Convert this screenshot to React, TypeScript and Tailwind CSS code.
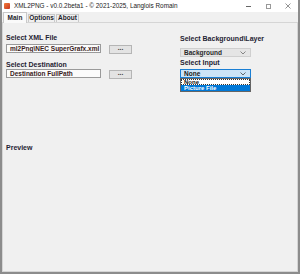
import React from 'react';

function Chevron({ color = '#6b6b6b' }: { color?: string }) {
  return (
    <svg width="6" height="4" viewBox="0 0 6 4" className="shrink-0">
      <polyline points="0.5,0.5 3,3 5.5,0.5" fill="none" stroke={color} strokeWidth="0.8" />
    </svg>
  );
}

function TitleBar() {
  return (
    <div className="flex h-[12px] items-center bg-white pl-[2px]">
      <div className="mr-[4px] h-[6px] w-[6px] rounded-[1px] bg-gradient-to-br from-[#f27b3a] to-[#c8331f]" />
      <span className="text-[6.4px] leading-[8px] text-[#222]">XML2PNG - v0.0.2beta1 - © 2021-2025, Langlois Romain</span>
      <div className="ml-auto flex items-center">
        <div className="flex w-[20px] justify-center">
          <div className="h-px w-[5px] bg-[#666]" />
        </div>
        <div className="flex w-[20px] justify-center">
          <div className="h-[5px] w-[5px] border border-[#999]" />
        </div>
        <div className="flex w-[20px] justify-center">
          <svg width="6" height="6" viewBox="0 0 6 6">
            <path d="M0.5 0.5 L5.5 5.5 M5.5 0.5 L0.5 5.5" stroke="#777" strokeWidth="0.8" />
          </svg>
        </div>
      </div>
    </div>
  );
}

function Tabs() {
  const tab =
    'flex shrink-0 items-center justify-center whitespace-nowrap border border-b-0 border-[#c9c9c9] text-[6.5px] font-bold leading-none text-[#1d1d2b]';
  return (
    <div className="flex h-[10px] items-end pl-[1px]">
      <div className={`${tab} z-10 -mb-px h-[11px] w-[24px] bg-[#fafafa]`}>Main</div>
      <div className={`${tab} ml-px h-[8px] w-[27px] bg-[#f0f0f0]`}>Options</div>
      <div className={`${tab} ml-px h-[8px] w-[23px] bg-[#f0f0f0]`}>About</div>
    </div>
  );
}

function Label({ children, className = '' }: { children: React.ReactNode; className?: string }) {
  return <div className={`h-[8px] whitespace-nowrap text-[7px] font-bold leading-[8px] text-[#1f2333] ${className}`}>{children}</div>;
}

function FileRow({ value, className = '' }: { value: string; className?: string }) {
  return (
    <div className={`flex items-start ${className}`}>
      <div className="flex h-[9px] w-[95px] items-center overflow-hidden whitespace-nowrap border border-[#9a9a9a] bg-[#fbfbfb] pl-[3px] text-[6.5px] font-bold text-[#3a1c1c]">
        {value}
      </div>
      <button
        type="button"
        className="ml-[8px] mt-px flex h-[9px] w-[23px] items-center justify-center border border-[#b5b5b5] bg-[#e3e3e3] pb-[2px] text-[6.5px] font-bold leading-none text-[#333]"
      >
        ...
      </button>
    </div>
  );
}

export default function App() {
  return (
    <div className="flex h-[274px] w-[300px] flex-col border-x-2 border-b-2 border-[#8c8c8c] bg-[#f0f0f0] font-['Liberation_Sans',Arial,sans-serif]">
      <TitleBar />
      <Tabs />
      <div className="relative flex flex-1 flex-col border border-[#d5d5d5] bg-[#f0f0f0] pl-[3px] pt-[11px]">
        <div className="flex">
          <div className="flex w-[174px] flex-col">
            <Label>Select XML File</Label>
            <FileRow value={'ml2Png\\NEC SuperGrafx.xml'} className="mt-[2px]" />
            <Label className="mt-[7px]">Select Destination</Label>
            <FileRow value="Destination FullPath" />
          </div>
          <div className="flex flex-col pt-px">
            <Label>{'Select Background\\Layer'}</Label>
            <div className="mt-[5px] flex h-[9px] w-[71px] items-center justify-between border border-[#cfcfcf] bg-[#e5e5e5] pl-[3px] pr-[4px] text-[6.5px] font-bold text-[#2a2a2a]">
              <span>Background</span>
              <Chevron />
            </div>
            <Label className="mt-[2px]">Select Input</Label>
            <div className="relative mt-[2px]">
              <div className="flex h-[9px] w-[71px] items-center justify-between border border-[#1a7fd4] bg-[#cce4f7] pl-[3px] pr-[4px] text-[6.5px] font-bold text-[#1a1a1a]">
                <span>None</span>
                <Chevron color="#444" />
              </div>
              <div className="absolute left-0 top-[9px] z-20 flex w-[71px] flex-col border border-[#646464] bg-white text-[6px] font-bold leading-[6px]">
                <div className="h-[6px] pl-[3px] text-[#111] outline-1 -outline-offset-1 outline-dotted outline-[#333]">None</div>
                <div className="h-[6px] bg-[#0078d7] pl-[3px] text-white">Picture File</div>
              </div>
            </div>
          </div>
        </div>
        <Label className="mt-[65px]">Preview</Label>
      </div>
    </div>
  );
}
